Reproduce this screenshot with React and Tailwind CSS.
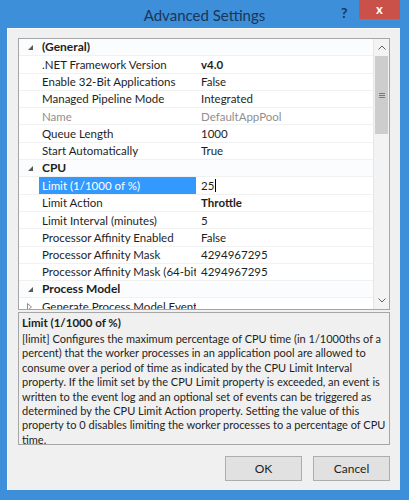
import React from "react";

const rows = [
  { cat: "(General)" },
  { label: ".NET Framework Version", value: "v4.0", bold: true },
  { label: "Enable 32-Bit Applications", value: "False" },
  { label: "Managed Pipeline Mode", value: "Integrated" },
  { label: "Name", value: "DefaultAppPool", dim: true },
  { label: "Queue Length", value: "1000" },
  { label: "Start Automatically", value: "True" },
  { cat: "CPU" },
  { label: "Limit (1/1000 of %)", value: "25", selected: true },
  { label: "Limit Action", value: "Throttle", bold: true },
  { label: "Limit Interval (minutes)", value: "5" },
  { label: "Processor Affinity Enabled", value: "False" },
  { label: "Processor Affinity Mask", value: "4294967295" },
  { label: "Processor Affinity Mask (64-bit option)", value: "4294967295" },
  { cat: "Process Model" },
  { label: "Generate Process Model Event Log Entry", value: "", collapsed: true },
];

const descLines = [
  "[limit] Configures the maximum percentage of CPU time (in 1/1000ths of a",
  "percent) that the worker processes in an application pool are allowed to",
  "consume over a period of time as indicated by the CPU Limit Interval",
  "property. If the limit set by the CPU Limit property is exceeded, an event is",
  "written to the event log and an optional set of events can be triggered as",
  "determined by the CPU Limit Action property. Setting the value of this",
  "property to 0 disables limiting the worker processes to a percentage of CPU",
  "time.",
];

function Expanded() {
  return (
    <svg width="7" height="7" viewBox="0 0 7 7">
      <path d="M6 1 L6 6 L1 6 Z" fill="#595959" />
    </svg>
  );
}

function Collapsed() {
  return (
    <svg width="7" height="8" viewBox="0 0 7 8">
      <path d="M1.5 0.5 L5.5 4 L1.5 7.5 Z" fill="none" stroke="#8a8a8a" />
    </svg>
  );
}

export default function App() {
  return (
    <div
      className="w-[409px] h-[500px] bg-[#3c8fd8] flex flex-col overflow-hidden text-[11.5px] text-[#1e1e1e]"
      style={{ fontFamily: "Lato, 'Noto Sans', sans-serif" }}
    >
      {/* Title bar */}
      <div className="h-[28px] flex items-start relative shrink-0">
        <div className="flex-1 text-center pt-[4px] text-[15px] text-[#1d3557]">
          Advanced Settings
        </div>
        <div className="absolute left-[341px] top-[2px] text-[14px] font-bold text-[#1d3557]">?</div>
        <div className="absolute left-[359px] top-0 w-[41px] h-[19px] bg-[#c9514a] flex items-center justify-center text-white text-[13px] font-bold leading-none">
          x
        </div>
      </div>

      {/* Client area */}
      <div className="ml-[7px] mr-[9px] mb-[10px] flex-1 bg-[#f0f0f0] border-t border-l border-[#fafafa] px-[10px] pt-[9px] flex flex-col">
        {/* Property grid */}
        <div className="h-[272px] bg-white border border-[#a6a6a6] flex overflow-hidden">
          <div className="flex-1 overflow-hidden">
            {rows.map((r, i) =>
              r.cat ? (
                <div key={i} className="h-[17.3px] flex items-center bg-[#fbfcfd] border-b border-[#f1f1f1]">
                  <div className="w-[20px] flex justify-center pl-[2px]">
                    <Expanded />
                  </div>
                  <span className="pl-[3px] font-bold text-[12px]">{r.cat}</span>
                </div>
              ) : (
                <div key={i} className="h-[17.3px] flex items-center border-b border-[#f1f1f1]">
                  <div className="w-[20px] flex justify-center">{r.collapsed && <Collapsed />}</div>
                  <div
                    className={
                      "w-[157px] h-full flex items-center pl-[3px] whitespace-nowrap overflow-hidden " +
                      (r.selected ? "bg-[#3399ff] text-white" : r.dim ? "text-[#8f8f8f]" : "")
                    }
                  >
                    {r.label}
                  </div>
                  <div
                    className={
                      "flex-1 pl-[5px] whitespace-nowrap flex items-center " +
                      (r.bold ? "font-bold " : "") +
                      (r.dim ? "text-[#8f8f8f]" : "")
                    }
                  >
                    {r.value}
                    {r.selected && <span className="inline-block w-px h-[13px] bg-black ml-[1px]" />}
                  </div>
                </div>
              )
            )}
          </div>
          {/* Scrollbar */}
          <div className="w-[16px] bg-[#f3f3f3] border-l border-[#e6e6e6] flex flex-col">
            <div className="h-[17px] flex items-center justify-center">
              <svg width="8" height="5" viewBox="0 0 8 5">
                <path d="M0.5 4.5 L4 1 L7.5 4.5" fill="none" stroke="#606060" />
              </svg>
            </div>
            <div className="h-[78px] mx-[1px] bg-[#cdcdcd] flex items-center justify-center">
              <div className="flex flex-col gap-[1px]">
                <div className="w-[6px] h-px bg-[#7a7a7a]" />
                <div className="w-[6px] h-px bg-[#7a7a7a]" />
                <div className="w-[6px] h-px bg-[#7a7a7a]" />
              </div>
            </div>
            <div className="flex-1" />
            <div className="h-[17px] flex items-center justify-center">
              <svg width="8" height="5" viewBox="0 0 8 5">
                <path d="M0.5 0.5 L4 4 L7.5 0.5" fill="none" stroke="#606060" />
              </svg>
            </div>
          </div>
        </div>

        {/* Description pane */}
        <div className="mt-[2px] h-[133px] border border-[#a6a6a6] bg-[#f0f0f0] pl-[3px] pt-[2px] text-[11px] leading-[14.4px] overflow-hidden">
          <div className="font-bold text-[11.5px] leading-[16px]">Limit (1/1000 of %)</div>
          <div className="mt-[1px]">
            {descLines.map((l, i) => (
              <div key={i} className="whitespace-nowrap">{l}</div>
            ))}
          </div>
        </div>

        {/* Buttons */}
        <div className="mt-[11px] flex justify-end gap-[11px]">
          <button className="w-[77px] h-[25px] bg-[#e1e1e1] border border-[#adadad] text-[12px]">OK</button>
          <button className="w-[77px] h-[25px] bg-[#e1e1e1] border border-[#adadad] text-[12px]">Cancel</button>
        </div>
      </div>
    </div>
  );
}
